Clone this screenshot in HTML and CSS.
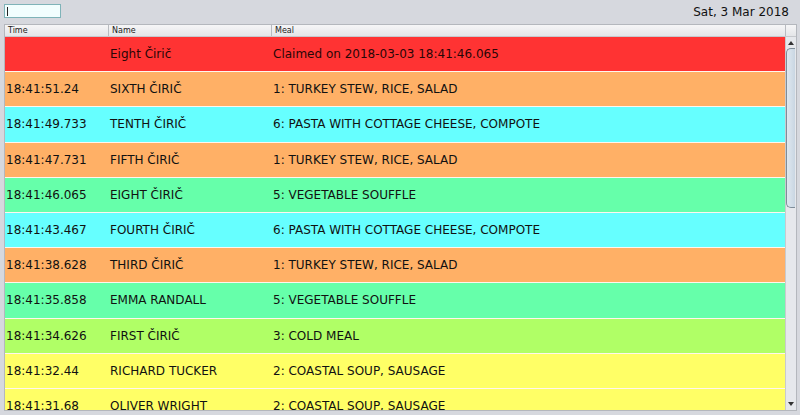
FILE: index.html
```html
<!DOCTYPE html>
<html>
<head>
<meta charset="utf-8">
<link rel="stylesheet" href="styles.css">
</head>
<body>
<div class="top">
  <div class="field"><span class="caret"></span></div>
  <div class="date">Sat, 3 Mar 2018</div>
</div>
<div class="table">
  <div class="head">
    <div class="hc c-time">Time</div>
    <div class="hc c-name">Name</div>
    <div class="hc c-meal">Meal</div>
    <div class="hc c-sb"></div>
  </div>
  <div class="body">
    <div class="rows">
      <div class="row red"><div class="c-time"></div><div class="c-name">Eight Čirič</div><div class="c-meal">Claimed on 2018-03-03 18:41:46.065</div></div>
      <div class="row orange"><div class="c-time">18:41:51.24</div><div class="c-name">SIXTH ČIRIČ</div><div class="c-meal">1: TURKEY STEW, RICE, SALAD</div></div>
      <div class="row cyan"><div class="c-time">18:41:49.733</div><div class="c-name">TENTH ČIRIČ</div><div class="c-meal">6: PASTA WITH COTTAGE CHEESE, COMPOTE</div></div>
      <div class="row orange"><div class="c-time">18:41:47.731</div><div class="c-name">FIFTH ČIRIČ</div><div class="c-meal">1: TURKEY STEW, RICE, SALAD</div></div>
      <div class="row green"><div class="c-time">18:41:46.065</div><div class="c-name">EIGHT ČIRIČ</div><div class="c-meal">5: VEGETABLE SOUFFLE</div></div>
      <div class="row cyan"><div class="c-time">18:41:43.467</div><div class="c-name">FOURTH ČIRIČ</div><div class="c-meal">6: PASTA WITH COTTAGE CHEESE, COMPOTE</div></div>
      <div class="row orange"><div class="c-time">18:41:38.628</div><div class="c-name">THIRD ČIRIČ</div><div class="c-meal">1: TURKEY STEW, RICE, SALAD</div></div>
      <div class="row green"><div class="c-time">18:41:35.858</div><div class="c-name">EMMA RANDALL</div><div class="c-meal">5: VEGETABLE SOUFFLE</div></div>
      <div class="row lime"><div class="c-time">18:41:34.626</div><div class="c-name">FIRST ČIRIČ</div><div class="c-meal">3: COLD MEAL</div></div>
      <div class="row yellow"><div class="c-time">18:41:32.44</div><div class="c-name">RICHARD TUCKER</div><div class="c-meal">2: COASTAL SOUP, SAUSAGE</div></div>
      <div class="row yellow"><div class="c-time">18:41:31.68</div><div class="c-name">OLIVER WRIGHT</div><div class="c-meal">2: COASTAL SOUP, SAUSAGE</div></div>
    </div>
    <div class="sb">
      <div class="arrow up"></div>
      <div class="track"><div class="thumb"></div></div>
      <div class="arrow down"></div>
    </div>
  </div>
</div>
</body>
</html>
```
FILE: styles.css
```css
html, body {
  margin: 0;
  padding: 0;
}
body {
  background: #d6d8de;
  font-family: "DejaVu Sans", Verdana, sans-serif;
  color: #111;
  width: 800px;
  height: 415px;
  overflow: hidden;
}
.top {
  display: flex;
  justify-content: space-between;
  align-items: flex-start;
  height: 24px;
  padding: 4px 11px 0 4px;
  box-sizing: border-box;
}
.field {
  width: 57px;
  height: 14px;
  box-sizing: border-box;
  border: 1px solid #7fb3b8;
  background: #f2fefe;
  display: flex;
  align-items: center;
  padding-left: 2px;
}
.caret {
  width: 1px;
  height: 9px;
  background: #222;
}
.date {
  font-size: 12px;
  line-height: 14px;
  margin-top: 1px;
  color: #111;
}
.table {
  margin-left: 4px;
  width: 793px;
  height: 387px;
  box-sizing: border-box;
  border: 1px solid #b4b7bd;
  background: #e2e4e8;
  display: flex;
  flex-direction: column;
}
.head {
  display: flex;
  height: 11px;
  background: linear-gradient(#f6f6f7, #e4e5e8);
  border-bottom: 1px solid #c6c8cc;
}
.hc {
  font-size: 8px;
  line-height: 11px;
  color: #222;
  padding-left: 3px;
  box-sizing: border-box;
  border-right: 1px solid #b8bbc0;
}
.head .c-time { width: 104px; }
.head .c-name { width: 163px; }
.head .c-meal { flex: 1; }
.head .c-sb { width: 10px; border-right: none; padding: 0; }
.body {
  flex: 1;
  display: flex;
  overflow: hidden;
}
.rows {
  flex: 1;
  overflow: hidden;
}
.row {
  display: flex;
  height: 35.2px;
  box-sizing: border-box;
  border-bottom: 1px solid #fff6ee;
  align-items: center;
  font-size: 12px;
  color: #111;
}
.row .c-time { width: 104px; padding-left: 1px; box-sizing: border-box; }
.row .c-name { width: 163px; padding-left: 1px; box-sizing: border-box; }
.row .c-meal { flex: 1; padding-left: 1px; }
.red { background: #ff3333; color: #2a0606; }
.orange { background: #ffb066; }
.cyan { background: #66ffff; }
.green { background: #66ffaa; }
.lime { background: #b0ff66; }
.yellow { background: #ffff66; }
.sb {
  width: 10px;
  display: flex;
  flex-direction: column;
  background: #e6e8ec;
  border-left: 1px solid #c8cace;
}
.arrow {
  height: 10px;
  position: relative;
}
.arrow::after {
  content: "";
  position: absolute;
  left: 2px;
  border-left: 3px solid transparent;
  border-right: 3px solid transparent;
}
.arrow.up::after {
  top: 4px;
  border-bottom: 4px solid #333;
}
.arrow.down::after {
  top: 2px;
  border-top: 4px solid #333;
}
.track {
  flex: 1;
  padding-top: 1px;
}
.thumb {
  width: 9px;
  height: 160px;
  box-sizing: border-box;
  border: 1px solid #7f8d99;
  border-right: none;
  border-radius: 5px 0 0 5px;
  background: linear-gradient(90deg, #dfe8f0, #c9d6e2);
}
```
